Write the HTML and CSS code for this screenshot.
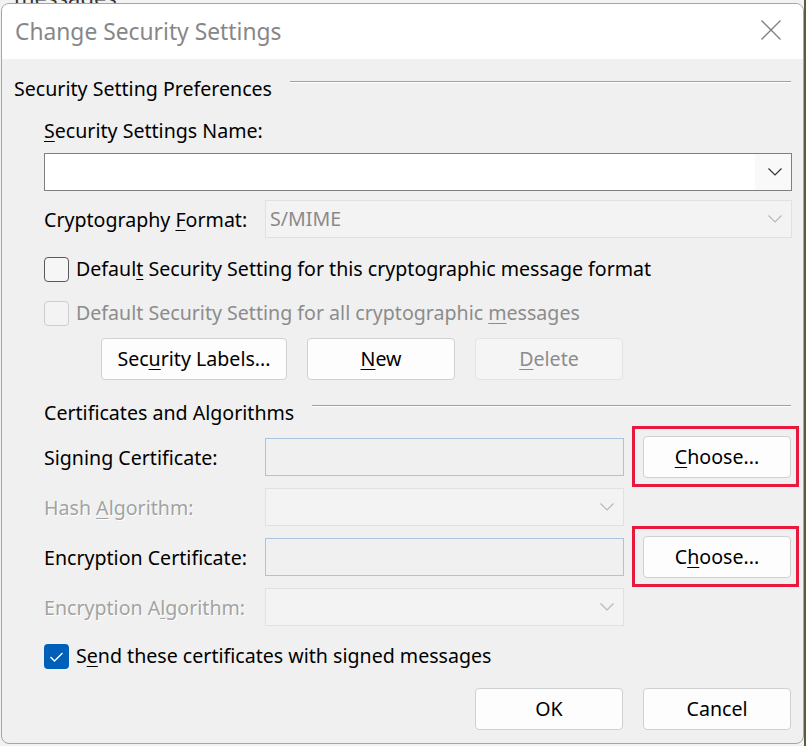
FILE: index.html
```html
<!DOCTYPE html>
<html>
<head>
<meta charset="utf-8">
<title>Change Security Settings</title>
<link rel="stylesheet" href="styles.css">
</head>
<body>
<div class="backdrop-text">messages</div>
<div class="dialog">
  <div class="titlebar">
    <span class="title">Change Security Settings</span>
    <svg class="close" width="20" height="20" viewBox="0 0 20 20"><path d="M0.5 0.5 L19.5 19.5 M19.5 0.5 L0.5 19.5" stroke="#808080" stroke-width="1.3" fill="none"/></svg>
  </div>
  <div class="content">
    <div class="group-head"><span>Security Setting Preferences</span><span class="rule"></span></div>
    <div class="group">
      <div class="label name-label"><u>S</u>ecurity Settings Name:</div>
      <div class="combo combo-name">
        <span class="combo-value"></span>
        <span class="combo-btn"><svg width="14" height="8" viewBox="0 0 14 8"><path d="M0.5 0.5 L7 7 L13.5 0.5" stroke="#333" stroke-width="1.2" fill="none"/></svg></span>
      </div>
      <div class="crypto-row">
        <span class="label">Cryptography <u>F</u>ormat:</span>
        <div class="combo disabled">
          <span class="combo-value">S/MIME</span>
          <span class="combo-btn"><svg width="14" height="8" viewBox="0 0 14 8"><path d="M0.5 0.5 L7 7 L13.5 0.5" stroke="#b8b8b8" stroke-width="1.2" fill="none"/></svg></span>
        </div>
      </div>
      <div class="check-row first">
        <span class="box"></span>
        <span>Defaul<u>t</u> Security Setting for this cryptographic message format</span>
      </div>
      <div class="check-row off second">
        <span class="box"></span>
        <span>Default Security Setting for all cryptographic <u>m</u>essages</span>
      </div>
      <div class="btn-row">
        <button class="btn wide">Sec<u>u</u>rity Labels...</button>
        <button class="btn"><u>N</u>ew</button>
        <button class="btn" disabled><u>D</u>elete</button>
      </div>
      <div class="group-head sub"><span>Certificates and Algorithms</span><span class="rule"></span></div>
      <div class="cert-grid">
        <span class="label">Signing Certificate:</span>
        <div class="field"></div>
        <div class="highlight"><button class="btn"><u>C</u>hoose...</button></div>

        <span class="label dim">Hash <u>A</u>lgorithm:</span>
        <div class="combo disabled">
          <span class="combo-value"></span>
          <span class="combo-btn"><svg width="14" height="8" viewBox="0 0 14 8"><path d="M0.5 0.5 L7 7 L13.5 0.5" stroke="#b8b8b8" stroke-width="1.2" fill="none"/></svg></span>
        </div>
        <span></span>

        <span class="label">Encryption Certificate:</span>
        <div class="field"></div>
        <div class="highlight"><button class="btn">C<u>h</u>oose...</button></div>

        <span class="label dim">Encryption A<u>l</u>gorithm:</span>
        <div class="combo disabled">
          <span class="combo-value"></span>
          <span class="combo-btn"><svg width="14" height="8" viewBox="0 0 14 8"><path d="M0.5 0.5 L7 7 L13.5 0.5" stroke="#b8b8b8" stroke-width="1.2" fill="none"/></svg></span>
        </div>
        <span></span>
      </div>
      <div class="check-row on send">
        <span class="box"><svg width="25" height="25" viewBox="0 0 25 25"><path d="M6.5 13 L10.5 17 L18.5 9" stroke="#fff" stroke-width="1.4" fill="none"/></svg></span>
        <span>S<u>e</u>nd these certificates with signed messages</span>
      </div>
      <div class="footer">
        <button class="btn">OK</button>
        <button class="btn">Cancel</button>
      </div>
    </div>
  </div>
</div>
</body>
</html>
```
FILE: styles.css
```css
* { box-sizing: border-box; }
html, body { margin: 0; padding: 0; }
body {
  width: 806px;
  height: 746px;
  overflow: hidden;
  position: relative;
  background: linear-gradient(to right, #f2f2f2 0, #f2f2f2 804px, #5e5b42 804px);
  font-family: "Noto Sans", "Segoe UI", sans-serif;
  font-size: 19.6px;
  line-height: 28px;
  color: #000;
}
.backdrop-text {
  position: absolute;
  left: 14px;
  top: -17px;
  font-size: 22px;
  color: #333;
}
.dialog {
  position: relative;
  margin: 3px 0 0 1px;
  width: 803px;
  height: 741px;
  border: 1px solid #a6a6a6;
  border-radius: 8px;
  overflow: hidden;
  background: #f0f0f0;
}
.titlebar {
  height: 55px;
  background: #fff;
  display: flex;
  align-items: center;
  padding: 0 22px 0 13px;
}
.title {
  font-size: 22.8px;
  color: #878787;
}
.close {
  margin-left: auto;
  align-self: flex-start;
  margin-top: 16px;
}
.content {
  padding: 16px 11px 0 12px;
}
.group-head {
  display: flex;
  height: 28px;
}
.group-head .rule {
  flex: 1;
  height: 2px;
  border-top: 1px solid #a0a0a0;
  border-bottom: 1px solid #fff;
  margin: 6px 1px 0 18px;
}
.group {
  padding-left: 30px;
}
.label { white-space: nowrap; }
.name-label {
  margin-top: 14px;
}
u { text-underline-offset: 3px; text-decoration-thickness: 1px; }
.combo {
  display: flex;
  height: 38px;
  background: #fff;
  border: 1px solid #7f7f7f;
}
.combo-name { margin-top: 8px; }
.combo-value {
  flex: 1;
  padding-left: 4px;
  line-height: 36px;
}
.combo-btn {
  width: 36px;
  background: #f9f9f9;
  display: flex;
  align-items: center;
  justify-content: flex-end;
  padding-right: 9px;
}
.combo.disabled {
  background: #f3f3f3;
  border-color: #e1e1e1;
  color: #8a8a8a;
}
.combo.disabled .combo-btn { background: transparent; }
.crypto-row {
  margin-top: 9px;
  display: grid;
  grid-template-columns: 221px 1fr;
  align-items: center;
}
.crypto-row .label { padding-top: 2px; }
.check-row {
  display: flex;
  align-items: center;
  gap: 7px;
  height: 28px;
  white-space: nowrap;
}
.check-row.first { margin-top: 17px; }
.check-row.second { margin-top: 16px; }
.check-row .box {
  width: 25px;
  height: 25px;
  border: 1.5px solid #5a5a5a;
  border-radius: 4px;
  background: #f6f6f6;
  flex: none;
}
.check-row.off { color: #8c8c8c; }
.check-row.off .box {
  border: 1px solid #cdcdcd;
  background: #f3f3f3;
}
.check-row.on .box {
  border: none;
  background: #005fb8;
}
.check-row.on .box svg { display: block; }
.btn-row {
  margin-top: 11px;
  display: flex;
  gap: 20px;
  padding-left: 57px;
}
.btn {
  width: 148px;
  height: 42px;
  font: inherit;
  color: #000;
  background: #fdfdfd;
  border: 1px solid #d0d0d0;
  border-radius: 4px;
  padding: 0;
  white-space: nowrap;
}
.btn.wide { width: 186px; }
.btn:disabled {
  background: #f5f5f5;
  border-color: #e3e3e3;
  color: #8c8c8c;
}
.group-head.sub { margin-top: 19px; }
.cert-grid {
  margin-top: 11px;
  display: grid;
  grid-template-columns: 202px 359px 148px;
  grid-auto-rows: 38px;
  column-gap: 19px;
  row-gap: 12px;
  align-items: center;
}
.cert-grid .label { padding-top: 2px; }
.field {
  height: 38px;
  background: #f0f0f0;
  border: 1px solid #abc3df;
}
.label.dim {
  color: #a3a3a3;
  text-shadow: 1px 1px 0 #fff;
}
.highlight {
  position: relative;
  height: 38px;
}
.highlight .btn {
  margin-top: -2px;
  display: block;
}
.highlight::after {
  content: "";
  position: absolute;
  left: -11px;
  right: -8px;
  top: -12px;
  bottom: -11px;
  border: 3px solid #e8193c;
  pointer-events: none;
}
.check-row.send { margin-top: 16px; }
.footer {
  margin-top: 18px;
  display: flex;
  justify-content: flex-end;
  gap: 20px;
  padding-right: 1px;
}
```
